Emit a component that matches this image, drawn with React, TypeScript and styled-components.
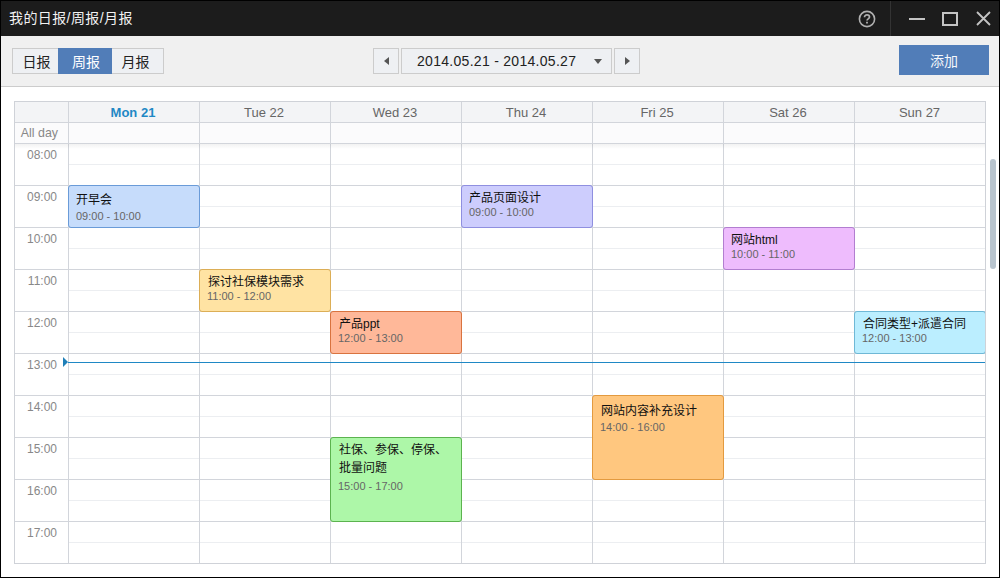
import React from "react";
import styled, { createGlobalStyle } from "styled-components";

const HOUR = 42;
const FONT = `"Liberation Sans", "Noto Sans CJK SC", sans-serif`;

const days = ["Mon 21", "Tue 22", "Wed 23", "Thu 24", "Fri 25", "Sat 26", "Sun 27"];
const hours = ["08:00", "09:00", "10:00", "11:00", "12:00", "13:00", "14:00", "15:00", "16:00", "17:00"];

type CalEvent = {
    day: number;
    start: number;
    span: number;
    title: string;
    time: string;
    bg: string;
    line: string;
    pad?: number;
    gap?: number;
    inset?: number;
};

const events: CalEvent[] = [
    { day: 0, start: 9, span: 1, title: "开早会", time: "09:00 - 10:00", bg: "#c6dcfb", line: "#6a9bd8", pad: 5, gap: 2, inset: 7 },
    { day: 1, start: 11, span: 1, title: "探讨社保模块需求", time: "11:00 - 12:00", bg: "#ffe3a3", line: "#dcae56" },
    { day: 2, start: 12, span: 1, title: "产品ppt", time: "12:00 - 13:00", bg: "#ffb899", line: "#d9733f" },
    { day: 2, start: 15, span: 2, title: "社保、参保、停保、批量问题", time: "15:00 - 17:00", bg: "#adf7a8", line: "#5cb34f", gap: 4 },
    { day: 3, start: 9, span: 1, title: "产品页面设计", time: "09:00 - 10:00", bg: "#cdcdfd", line: "#8f8fe0", inset: 7 },
    { day: 4, start: 14, span: 2, title: "网站内容补充设计", time: "14:00 - 16:00", bg: "#ffc77f", line: "#e39a3f", pad: 6, gap: 2 },
    { day: 5, start: 10, span: 1, title: "网站html", time: "10:00 - 11:00", bg: "#eebcfd", line: "#b27ed0", inset: 7 },
    { day: 6, start: 12, span: 1, title: "合同类型+派遣合同", time: "12:00 - 13:00", bg: "#bbeeff", line: "#6fb8d6" },
];

export default function App() {
    return (
        <Window>
            <GlobalStyle />
            <TitleBar>
                <WindowTitle>我的日报/周报/月报</WindowTitle>
                <HelpButton>
                    <svg width="18" height="18" viewBox="0 0 18 18" fill="none" stroke="#b0b0b0">
                        <circle cx="9" cy="9" r="7.6" strokeWidth="1.6" />
                        <path d="M6.5 7.2c0-1.4 1-2.3 2.5-2.3s2.5.9 2.5 2.2c0 1.8-2.5 1.8-2.5 3.5" strokeWidth="1.7" />
                        <path d="M9 11.8v1.8" strokeWidth="1.8" />
                    </svg>
                </HelpButton>
                <WindowButtons>
                    <svg width="16" height="16" viewBox="0 0 16 16" stroke="#c4c4c4" strokeWidth="2" fill="none">
                        <path d="M0 8h16" />
                    </svg>
                    <svg width="16" height="14" viewBox="0 0 16 14" stroke="#c4c4c4" strokeWidth="2" fill="none">
                        <path d="M1 1h14v12H1z" />
                    </svg>
                    <svg width="16" height="15" viewBox="0 0 16 15" stroke="#c4c4c4" strokeWidth="1.8" fill="none">
                        <path d="M2 1l13 13M15 1L2 14" />
                    </svg>
                </WindowButtons>
            </TitleBar>

            <Toolbar>
                <Segments>
                    <Segment $width={45} $nudge={2}>日报</Segment>
                    <Segment $width={54} $nudge={2} $active>周报</Segment>
                    <Segment $width={51} $nudge={-4}>月报</Segment>
                </Segments>
                <DatePicker>
                    <ArrowButton>
                        <Triangle $dir="left" />
                    </ArrowButton>
                    <DateField>
                        <span>2014.05.21 - 2014.05.27</span>
                        <Triangle $dir="down" />
                    </DateField>
                    <ArrowButton>
                        <Triangle $dir="right" />
                    </ArrowButton>
                </DatePicker>
                <AddButton>添加</AddButton>
            </Toolbar>

            <Content>
                <Calendar>
                    <HeadRow>
                        <HeadCorner />
                        {days.map((d, i) => (
                            <HeadCell key={d} $today={i === 0}>{d}</HeadCell>
                        ))}
                    </HeadRow>
                    <AllDayRow>
                        <AllDayLabel>All day</AllDayLabel>
                        {days.map((d) => (
                            <AllDayCell key={d} />
                        ))}
                    </AllDayRow>
                    <GridBody>
                        <TimeColumn>
                            {hours.map((h) => (
                                <TimeCell key={h}>{h}</TimeCell>
                            ))}
                        </TimeColumn>
                        {days.map((d, i) => (
                            <DayColumn key={d}>
                                {hours.map((h) => (
                                    <HourSlot key={h} />
                                ))}
                                {events
                                    .filter((e) => e.day === i)
                                    .map((e) => (
                                        <EventCard
                                            key={e.title}
                                            $top={(e.start - 8) * HOUR - 1}
                                            $height={e.span * HOUR + 1}
                                            $bg={e.bg}
                                            $line={e.line}
                                            $pad={e.pad ?? 3}
                                            $inset={e.inset ?? 8}
                                        >
                                            <EventTitle>{e.title}</EventTitle>
                                            <EventTime $gap={e.gap ?? 0} $hang={e.inset ? 0 : 1}>{e.time}</EventTime>
                                        </EventCard>
                                    ))}
                            </DayColumn>
                        ))}
                        <NowLine />
                        <NowMarker />
                        <ScrollShadow />
                    </GridBody>
                </Calendar>
                <ScrollThumb />
            </Content>
        </Window>
    );
}

const GlobalStyle = createGlobalStyle`
    html, body {
        margin: 0;
        padding: 0;
        background: #fff;
    }
    * {
        box-sizing: border-box;
    }
`;

const Window = styled.div.attrs({ lang: "zh-CN" })`
    width: 1000px;
    height: 578px;
    display: flex;
    flex-direction: column;
    border: 1px solid #000;
    background: #fff;
    font-family: ${FONT};
    overflow: hidden;
`;

const TitleBar = styled.div`
    height: 35px;
    flex: none;
    display: flex;
    align-items: center;
    background: #1c1c1c;
    color: #f2f2f2;
    padding-left: 8px;
`;

const WindowTitle = styled.div`
    font-size: 14px;
    letter-spacing: 0.4px;
    line-height: 18px;
    margin-top: -1px;
    flex: 1;
`;

const HelpButton = styled.div`
    width: 18px;
    height: 18px;
    margin-right: 14px;
`;

const WindowButtons = styled.div`
    height: 35px;
    width: 109px;
    flex: none;
    display: flex;
    align-items: center;
    gap: 17px;
    padding-left: 18px;
    border-left: 1px solid #333;
`;

const Toolbar = styled.div`
    height: 51px;
    flex: none;
    display: flex;
    align-items: center;
    padding: 0 10px 0 11px;
    background: #f0f0f0;
    border-bottom: 1px solid #ccc;
`;

const Segments = styled.div`
    display: flex;
    height: 26px;
    margin-top: -1px;
    border: 1px solid #ccc;
    background: #eef0f3;
`;

const Segment = styled.div<{ $width: number; $active?: boolean; $nudge: number }>`
    width: ${(p) => p.$width}px;
    margin: ${(p) => (p.$active ? "-1px 0" : "0")};
    padding-left: ${(p) => Math.max(p.$nudge, 0)}px;
    padding-right: ${(p) => Math.max(-p.$nudge, 0)}px;
    display: flex;
    align-items: center;
    justify-content: center;
    font-size: 14px;
    color: ${(p) => (p.$active ? "#fff" : "#222")};
    background: ${(p) => (p.$active ? "#517db8" : "transparent")};
`;

const DatePicker = styled.div`
    display: flex;
    gap: 2px;
    height: 26px;
    margin-left: 209px;
`;

const ArrowButton = styled.div`
    width: 26px;
    display: flex;
    align-items: center;
    justify-content: center;
    border: 1px solid #ccc;
    background: #eef0f3;
`;

const DateField = styled.div`
    width: 211px;
    display: flex;
    align-items: center;
    justify-content: space-between;
    padding: 0 9px 0 15px;
    border: 1px solid #ccc;
    background: #eef0f3;
    font-size: 14px;
    letter-spacing: 0.29px;
    color: #222;
`;

const triangleBorders = {
    left: "border-width: 4px 5px 4px 0; border-color: transparent #555 transparent transparent;",
    right: "border-width: 4px 0 4px 5px; border-color: transparent transparent transparent #555;",
    down: "border-width: 5px 4px 0 4px; border-color: #555 transparent transparent transparent;",
};

const Triangle = styled.i<{ $dir: "left" | "right" | "down" }>`
    display: block;
    width: 0;
    height: 0;
    border-style: solid;
    ${(p) => triangleBorders[p.$dir]}
`;

const AddButton = styled.div`
    width: 90px;
    height: 30px;
    margin-left: auto;
    margin-top: -3px;
    display: flex;
    align-items: center;
    justify-content: center;
    background: #517db8;
    color: #f4f7fb;
    font-size: 14px;
`;

const Content = styled.div`
    flex: 1;
    position: relative;
    padding: 14px 0 0 13px;
`;

const Calendar = styled.div`
    width: 972px;
    height: 463px;
    display: flex;
    flex-direction: column;
    border: 1px solid #cfd2d8;
    overflow: hidden;
`;

const HeadRow = styled.div`
    display: flex;
    height: 21px;
    flex: none;
    background: #f3f4f6;
    border-bottom: 1px solid #d2d5db;
`;

const HeadCorner = styled.div`
    width: 54px;
    flex: none;
    border-right: 1px solid #d2d5db;
`;

const HeadCell = styled.div<{ $today?: boolean }>`
    width: 131px;
    flex: none;
    padding-right: 2px;
    border-right: 1px solid #d2d5db;
    text-align: center;
    font-size: 13px;
    line-height: 22px;
    font-weight: ${(p) => (p.$today ? 700 : 400)};
    color: ${(p) => (p.$today ? "#1f88c5" : "#666")};
    &:last-child {
        border-right: none;
    }
`;

const AllDayRow = styled.div`
    display: flex;
    height: 21px;
    flex: none;
    background: #fbfbfc;
    border-bottom: 1px solid #d2d5db;
`;

const AllDayLabel = styled.div`
    width: 54px;
    flex: none;
    border-right: 1px solid #d2d5db;
    padding-right: 10px;
    text-align: right;
    font-size: 12.4px;
    line-height: 21px;
    color: #888;
`;

const AllDayCell = styled.div`
    width: 131px;
    flex: none;
    border-right: 1px solid #d2d5db;
    &:last-child {
        border-right: none;
    }
`;

const GridBody = styled.div`
    display: flex;
    flex: 1;
    position: relative;
`;

const TimeColumn = styled.div`
    width: 54px;
    flex: none;
    border-right: 1px solid #d2d5db;
`;

const TimeCell = styled.div`
    height: 42px;
    padding: 4px 11px 0 0;
    border-bottom: 1px solid #d2d5db;
    text-align: right;
    font-size: 12px;
    line-height: 14px;
    color: #888;
    &:last-child {
        border-bottom: none;
    }
`;

const DayColumn = styled.div`
    width: 131px;
    flex: none;
    position: relative;
    border-right: 1px solid #d2d5db;
    &:nth-child(8) {
        width: 130px;
        border-right: none;
    }
`;

const HourSlot = styled.div`
    height: 42px;
    border-bottom: 1px solid #d2d5db;
    background: linear-gradient(#eceef1, #eceef1) 0 20px / 100% 1px no-repeat;
    &:nth-child(10) {
        border-bottom: none;
    }
`;

const EventCard = styled.div<{
    $top: number;
    $height: number;
    $bg: string;
    $line: string;
    $pad: number;
    $inset: number;
}>`
    position: absolute;
    left: -1px;
    right: -1px;
    top: ${(p) => p.$top}px;
    height: ${(p) => p.$height}px;
    padding: ${(p) => p.$pad}px 6px 0 ${(p) => p.$inset}px;
    background: ${(p) => p.$bg};
    border: 1px solid ${(p) => p.$line};
    border-radius: 3px;
    z-index: 2;
`;

const EventTitle = styled.div`
    font-size: 12px;
    line-height: 18px;
    margin-bottom: -1px;
    color: #111;
`;

const EventTime = styled.div<{ $gap: number; $hang: number }>`
    margin-top: ${(p) => p.$gap}px;
    margin-left: ${(p) => -p.$hang}px;
    font-size: 11px;
    line-height: 12px;
    color: #666;
`;

const NowLine = styled.div`
    position: absolute;
    left: 53px;
    right: 0;
    top: 218px;
    height: 1px;
    background: #1f88c5;
    z-index: 1;
`;

const NowMarker = styled.div`
    position: absolute;
    left: 48px;
    top: 213px;
    width: 0;
    height: 0;
    border-style: solid;
    border-width: 5px 0 5px 5px;
    border-color: transparent transparent transparent #1f7fb8;
    z-index: 1;
`;

const ScrollShadow = styled.div`
    position: absolute;
    left: 0;
    right: 0;
    top: 0;
    height: 5px;
    background: linear-gradient(rgba(0, 0, 0, 0.05), rgba(0, 0, 0, 0));
    z-index: 3;
`;

const ScrollThumb = styled.div`
    position: absolute;
    left: 989px;
    top: 72px;
    width: 6px;
    height: 110px;
    border-radius: 3px;
    background: #b8c4ce;
`;
